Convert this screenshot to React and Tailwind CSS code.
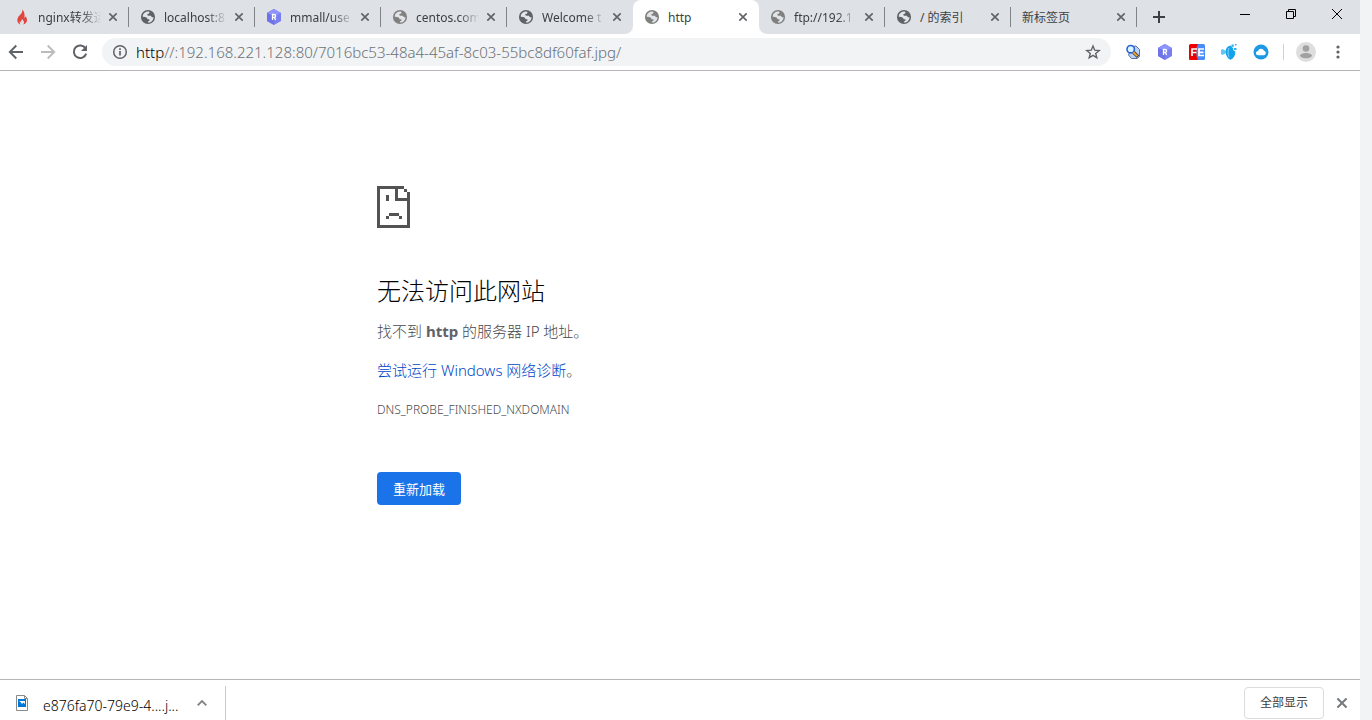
import { useState } from 'react';

const tabs = [
  { title: 'nginx转发运', icon: 'flame' },
  { title: 'localhost:8', icon: 'globe' },
  { title: 'mmall/use', icon: 'hexagon' },
  { title: 'centos.com', icon: 'globe-light' },
  { title: 'Welcome t', icon: 'globe' },
  { title: 'http', icon: 'globe-light' },
  { title: 'ftp://192.1', icon: 'globe-light' },
  { title: '/ 的索引', icon: 'globe' },
  { title: '新标签页' },
];

export default function App() {
  const [active, setActive] = useState(5);

  return (
    <div className="flex min-h-screen bg-[#f1f3f4] font-['Noto_Sans','Noto_Sans_CJK_SC',sans-serif] text-[#3c4043]">
      <div className="flex min-w-0 flex-1 flex-col bg-white">
        <TabStrip active={active} onSelect={setActive} />
        <Toolbar />
        <ErrorPage />
        <DownloadShelf />
      </div>
      <div className="w-3 shrink-0" />
    </div>
  );
}

function TabStrip({ active, onSelect }) {
  return (
    <header className="flex h-[34px] bg-[#dee1e6] pl-[3px]">
      <div className="flex min-w-0">
        {tabs.map((tab, i) => (
          <Tab
            key={tab.title}
            tab={tab}
            active={i === active}
            separator={i !== active && i !== active - 1}
            onSelect={() => onSelect(i)}
          />
        ))}
      </div>
      <button aria-label="New tab" className="flex w-11 items-center justify-center">
        <svg viewBox="0 0 12 12" className="size-3" stroke="#3c4043" strokeWidth="2">
          <path d="M6 0v12M0 6h12" />
        </svg>
      </button>
      <div className="ml-auto flex h-7">
        <button aria-label="Minimize" className="flex w-[46px] items-center justify-center">
          <svg viewBox="0 0 10 10" className="size-[10px]" shapeRendering="crispEdges">
            <path d="M0 5h10v1H0z" />
          </svg>
        </button>
        <button aria-label="Restore" className="flex w-[46px] items-center justify-center">
          <svg viewBox="0 0 10 10" className="size-[10px]" fill="none" stroke="#000">
            <path d="M.5 2.5h7v7h-7zM2.5 2.5v-2h7v7h-2" />
          </svg>
        </button>
        <button aria-label="Close window" className="flex w-[46px] items-center justify-center">
          <svg viewBox="0 0 10 10" className="size-[10px]" stroke="#000">
            <path d="M0 0l10 10M10 0L0 10" />
          </svg>
        </button>
      </div>
    </header>
  );
}

function Tab({ tab, active, separator, onSelect }) {
  return (
    <div
      className={`relative flex w-[126px] items-center ${
        active ? 'rounded-t-lg bg-white' : ''
      }`}
    >
      {active && (
        <>
          <Flare className="absolute bottom-0 -left-2 size-2" />
          <Flare className="absolute -right-2 bottom-0 size-2 -scale-x-100" />
        </>
      )}
      <button onClick={onSelect} className="flex min-w-0 flex-1 items-center gap-2 pl-[11px] text-left">
        {tab.icon && <Favicon name={tab.icon} />}
        <span
          className={`min-w-0 flex-1 overflow-hidden pt-0.5 text-xs whitespace-nowrap ${
            tab.title.length > 6
              ? '[mask-image:linear-gradient(to_right,#000_65%,transparent_96%)]'
              : ''
          }`}
        >
          {tab.title}
        </span>
      </button>
      <button aria-label={`Close ${tab.title}`} className="flex w-6 items-center justify-center pr-1.5">
        <Cross className="size-2" />
      </button>
      <span className={`h-5 w-px ${separator ? 'bg-[#808387]' : ''}`} />
    </div>
  );
}

// Curved foot of the active tab
function Flare({ className }) {
  return (
    <svg viewBox="0 0 8 8" className={className} fill="#fff">
      <path d="M8 0v8H0a8 8 0 0 0 8-8z" />
    </svg>
  );
}

function Cross({ className, color = '#5f6368' }) {
  return (
    <svg viewBox="0 0 8 8" className={className} stroke={color} strokeWidth="1.6">
      <path d="M.3.3l7.4 7.4M7.7.3L.3 7.7" />
    </svg>
  );
}

function Hexagon() {
  return (
    <svg viewBox="0 0 16 16" className="size-4 shrink-0">
      <path d="M8 0l7 4v8l-7 4-7-4V4z" fill="#7a7ff0" />
      <path d="M8 0L1 4v8l7 4z" fill="#6e73e6" />
      <path d="M8 0l7 4-7 3-7-3z" fill="#8d94fb" />
      <path
        d="M6.500 11V5.500h1.700a1.400 1.400 0 0 1 0 2.900H6.500M8.200 8.400L9.700 11"
        fill="none"
        stroke="#fff"
        strokeWidth="1.300"
      />
    </svg>
  );
}

function Favicon({ name }) {
  if (name === 'flame') {
    return (
      <svg viewBox="0 0 16 16" className="size-4 shrink-0">
        <path
          d="M8.2.5c.5 2-.2 3.200-1.500 4.700C5.500 6.500 3.300 8.200 3.300 11c0 2.300 1.400 3.900 3.300 4.600-1-1.100-1.200-2.400-.5-3.500.2.8.6 1.100 1.100 1.300-.3-1.500.4-2.400 1.200-3.300.1 1.200 1.600 1.800 1.600 3.300 0 .9-.5 1.600-1.200 2.200 2.500-.5 4.200-2.200 4.200-4.600 0-1.700-.8-2.700-1.500-3.700-.1.800-.5 1.300-1.200 1.500C11 5.600 10.400 2.300 8.200.5z"
          fill="#e0453e"
        />
      </svg>
    );
  }
  if (name === 'hexagon') return <Hexagon />;
  return (
    <svg viewBox="0 0 24 24" className="size-4 shrink-0">
      <circle cx="12" cy="12" r="10.600" fill={name === 'globe' ? '#5f6368' : '#80807f'} />
      <path
        d="M13.200 3.800c-3.800-.6-7.200 1.500-8.700 5l-.4 3 3.800.2 2.500 1.300c.8.700.4 1.800 1.400 2.200h2.300v2.100l-2.200 1v1.800c4.500.4 8.300-3.300 8.400-8l-2.500-.2-1.500-1.900-3.600-.1c-1.700-.2-2-1.500-1.500-2.600l2-.6 1.200-1.700z"
        fill="#e1e4e8"
      />
    </svg>
  );
}

function Toolbar() {
  return (
    <div className="flex h-[37px] items-center border-b border-[#b6b4b6] pr-3.5">
      <button aria-label="Back" className="flex size-8 items-center justify-center">
        <Arrow color="#5f6368" />
      </button>
      <button aria-label="Forward" disabled className="flex size-8 items-center justify-center">
        <Arrow color="#babcbe" className="-scale-x-100" />
      </button>
      <button aria-label="Reload" className="flex size-8 items-center justify-center">
        <svg viewBox="0 0 16 16" className="size-4" fill="none" stroke="#5f6368" strokeWidth="2">
          <path d="M13.500 4.300A6.300 6.300 0 1 0 14.200 9.600" />
          <path d="M15 1v6H9z" fill="#5f6368" stroke="none" />
        </svg>
      </button>

      <div className="ml-1.5 flex h-7 min-w-0 flex-1 items-center rounded-full bg-[#f1f3f4] px-2.5">
        <svg viewBox="0 0 16 16" className="size-4 shrink-0" fill="none" stroke="#5f6368" strokeWidth="1.500">
          <circle cx="8" cy="8" r="6.300" />
          <path d="M8 7v4.500M8 4.300v1.700" strokeWidth="1.700" />
        </svg>
        <label htmlFor="address" className="ml-2 text-[15px] font-light text-black">http</label>
        <input
          id="address"
          defaultValue="//:192.168.221.128:80/7016bc53-48a4-45af-8c03-55bc8df60faf.jpg/"
          className="min-w-0 flex-1 bg-transparent text-[15px] font-light text-[#6b7177] outline-none"
        />
        <button aria-label="Bookmark" className="shrink-0">
          <svg viewBox="0 0 16 16" className="size-4" fill="none" stroke="#5f6368" strokeWidth="1.400">
            <path d="M8 2l1.700 4.200 4.500.3-3.500 2.900 1.100 4.400L8 11.400l-3.800 2.400 1.100-4.400-3.500-2.900 4.500-.3z" />
          </svg>
        </button>
      </div>

      <div className="ml-3.5 flex items-center gap-4">
        <button aria-label="Page search"><SearchExtension /></button>
        <button aria-label="Rest client"><Hexagon /></button>
        <button aria-label="FE helper">
          <svg viewBox="0 0 16 16" className="size-4">
            <rect width="16" height="16" rx="1.500" fill="#4a8cf5" />
            <path d="M1.500 0H9L7.500 4v8L9 16H1.500A1.500 1.500 0 0 1 0 14.500v-13z" fill="#ee0000" />
            <path d="M3 12V5h5M3 8.500h4.500M15 5H10v6.500h5M10 8.300h4.500" fill="none" stroke="#fff" strokeWidth="1.700" />
          </svg>
        </button>
        <button aria-label="Fish">
          <svg viewBox="0 0 16 16" className="size-4">
            <path d="M0 6l1.500-1L5 7l-.5 2.500L1.500 11 0 10z" fill="#63c5f0" />
            <path d="M9.500 1.500C6.500 2 4.700 4.500 4.600 7.800c0 3.200 1.900 6.800 4.900 8 3.300-1.500 5-4.600 4.800-8.300L12 6V4z" fill="#12a3ec" />
            <path d="M10.500.5h2.300v2.300h-2.300zM14 0h1.500v1.500H14zM13 4h2.500v2H13z" fill="#2fb2f1" />
            <path d="M8 4c-1.300 2.500-1.300 6 0 9" fill="none" stroke="#8fd8f8" strokeWidth=".9" />
          </svg>
        </button>
        <button aria-label="Cloud">
          <svg viewBox="0 0 16 16" className="size-4">
            <circle cx="8" cy="8" r="7.500" fill="#1b99e5" />
            <path d="M5.200 11.300a2.200 2.200 0 0 1-.2-4.400 3.200 3.200 0 0 1 6-.1 2.300 2.300 0 0 1 0 4.500z" fill="#fff" />
          </svg>
        </button>
      </div>

      <span className="ml-3.5 h-4 w-px bg-[#cfd1d4]" />
      <button aria-label="Profile" className="ml-3">
        <svg viewBox="0 0 20 20" className="size-5">
          <circle cx="10" cy="10" r="10" fill="#dedede" />
          <circle cx="10" cy="6.500" r="3.300" fill="#a1a1a1" />
          <path d="M4 14c0-2 3-3 6-3s6 1 6 3c-1.200 1.500-3.500 2.300-6 2.300S5.200 15.500 4 14z" fill="#a1a1a1" />
        </svg>
      </button>
      <button aria-label="Menu" className="ml-3.5">
        <svg viewBox="0 0 16 16" className="size-4" fill="#5f6368">
          <circle cx="8" cy="3" r="1.600" />
          <circle cx="8" cy="8" r="1.600" />
          <circle cx="8" cy="13" r="1.600" />
        </svg>
      </button>
    </div>
  );
}

function Arrow({ color, className }) {
  return (
    <svg viewBox="0 0 16 16" className={`size-4 ${className || ''}`} fill="none" stroke={color} strokeWidth="1.900">
      <path d="M15 8H2.500M8.300 1.500L1.800 8l6.500 6.500" />
    </svg>
  );
}

function SearchExtension() {
  return (
    <svg viewBox="0 0 16 16" className="size-4">
      <path d="M7 2.500l4-.5 3.500 3.500v7l-2.500 2H6.500L3.500 11z" fill="#bdd2f5" stroke="#5472ad" />
      <circle cx="5.700" cy="5.200" r="3.700" fill="#d9f4ff" stroke="#2a62d8" strokeWidth="1.600" />
      <path d="M8.500 8.300l4.500 4.500" stroke="#3a3f52" strokeWidth="3.400" />
      <path d="M8.300 8.100l4 4" stroke="#f5a623" strokeWidth="2" />
    </svg>
  );
}

function ErrorPage() {
  return (
    <main className="flex-1">
      <div className="mx-auto max-w-[606px] pt-[115px] text-[15px] leading-6 font-light text-[#46494d]">
        <svg viewBox="0 0 33 42" className="h-[42px] w-[33px]" fill="#535353" shapeRendering="crispEdges">
          <path d="M0 0h27v3H3v36h27V15H18V3h3v9h9V6h3v36H0zM27 3h3v3h-3z" />
          <path d="M9 9h3v6H9zM12 27h10v3H12zM9 30h3v3H9zM22 30h3v3h-3z" />
        </svg>
        <h1 className="mt-[45px] text-2xl leading-9 text-black">无法访问此网站</h1>
        <p className="mt-2.5">
          找不到 <strong className="font-bold text-[#5f6368]">http</strong> 的服务器 IP 地址。
        </p>
        <p className="mt-[15px]">
          <a href="#diagnose" className="text-[#0046c8]">尝试运行 Windows 网络诊断</a>。
        </p>
        <p className="mt-4 text-xs leading-6">DNS_PROBE_FINISHED_NXDOMAIN</p>
        <button className="mt-[50px] h-[33px] rounded bg-[#1a73e8] px-4 text-[13px] font-normal text-white">
          重新加载
        </button>
      </div>
    </main>
  );
}

function DownloadShelf() {
  return (
    <footer className="flex h-[41px] items-center border-t border-[#b6b4b6] pt-1.5">
      <button className="flex h-full items-center pl-4">
        <svg viewBox="0 0 12 16" className="h-4 w-3">
          <path d="M.5.5h8l3 3v12H.5z" fill="#fff" stroke="#8a8a8a" />
          <path d="M8.500.5v3h3" fill="none" stroke="#8a8a8a" />
          <path d="M2 4h8v8H2z" fill="#0078d7" />
          <path d="M3 6h6v3L7.500 7.500 6 9 4.500 7z" fill="#fff" />
        </svg>
        <span className="mt-1.5 ml-[15px] min-w-[134px] text-left text-sm font-light text-black">e876fa70-79e9-4....j...</span>
      </button>
      <button aria-label="Download options" className="flex h-full w-12 items-center justify-center border-r border-[#c8cacc]">
        <svg viewBox="0 0 10 6" className="h-1.5 w-2.5" fill="none" stroke="#808387" strokeWidth="1.800">
          <path d="M.7 5.300L5 1l4.300 4.300" />
        </svg>
      </button>
      <button className="ml-auto h-8 w-20 rounded border border-[#dadce0] text-xs">
        全部显示
      </button>
      <button aria-label="Close downloads" className="flex w-9 items-center justify-center">
        <Cross className="size-2.5" color="#757a7f" />
      </button>
    </footer>
  );
}
